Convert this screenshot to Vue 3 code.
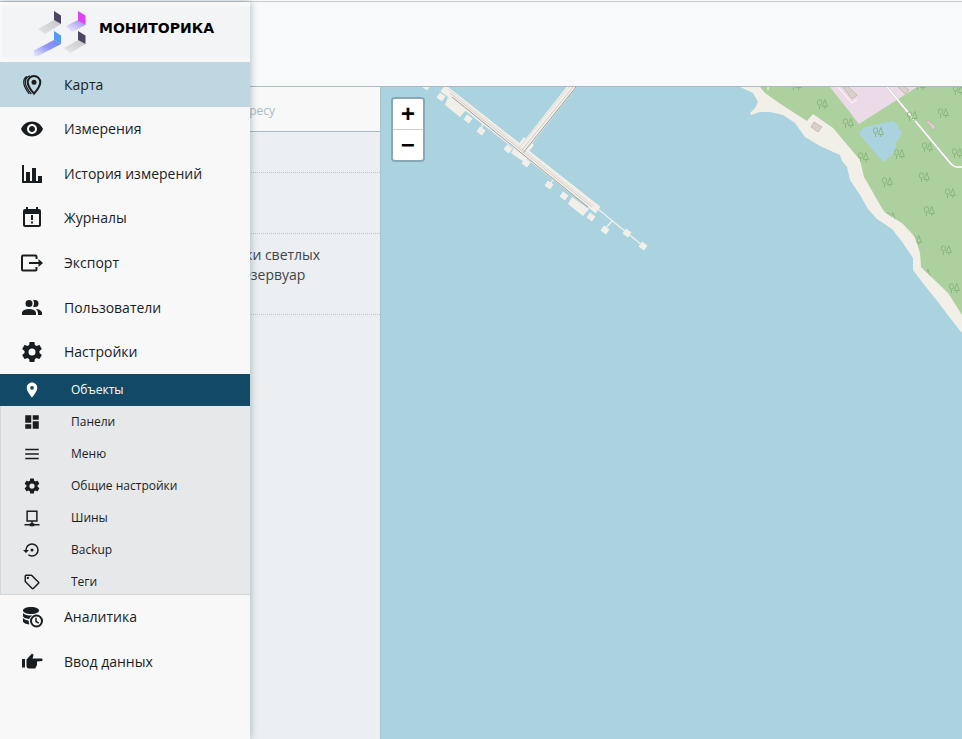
<script setup>
import { ref } from 'vue'

const icons = {
  pins: {
    stroke: [
      { d: 'M14 3a6.3 6.3 0 0 0-6.3 6.3C7.700 13.600 14 20.700 14 20.700s6.300-7.100 6.300-11.400A6.300 6.300 0 0 0 14 3z', w: 2 },
      { d: 'M10 2.800C6.800 3.600 5.300 6 5.300 9c0 4 3 8.500 6 12M6.800 3.500C4.500 4.800 3.700 6.500 3.700 9c0 4 2.500 8 5.500 12', w: 1.200 }
    ],
    fill: ['M14 6.800a2.500 2.500 0 1 0 0 5a2.500 2.500 0 1 0 0-5z']
  },
  eye: { fill: ['M12 4.500C7 4.500 2.730 7.610 1 12c1.730 4.390 6 7.500 11 7.500s9.270-3.110 11-7.500c-1.730-4.390-6-7.500-11-7.500zM12 17c-2.760 0-5-2.240-5-5s2.240-5 5-5 5 2.240 5 5-2.240 5-5 5zm0-8c-1.660 0-3 1.340-3 3s1.340 3 3 3 3-1.340 3-3-1.340-3-3-3z'] },
  chart: { fill: ['M2 3h2v16h2v-9h4v9h2V6h4v13h2v-5h4v7H2z'] },
  calendar: { fill: ['M19 3h-1V1h-2v2H8V1H6v2H5a2 2 0 0 0-2 2v14a2 2 0 0 0 2 2h14a2 2 0 0 0 2-2V5a2 2 0 0 0-2-2zm0 16H5V8h14zM11 9h2v5h-2zM11 15.500h2v2h-2z'] },
  export: { stroke: [{ d: 'M16.500 8V5.500a1 1 0 0 0-1-1H3a1 1 0 0 0-1 1v13a1 1 0 0 0 1 1h12.500a1 1 0 0 0 1-1V16M9 12h11', w: 2 }], fill: ['M18.500 8l4.500 4-4.500 4z'] },
  users: { fill: ['M16 17V19H2V17S2 13 9 13 16 17 16 17M12.500 7.500A3.500 3.500 0 1 0 9 11A3.500 3.500 0 0 0 12.500 7.500', 'M15.940 13A5.320 5.320 0 0 1 18 17V19H22V17S22 13.370 15.940 13M15 4A3.390 3.390 0 0 0 13.070 4.590A5 5 0 0 1 13.070 10.410A3.390 3.390 0 0 0 15 11A3.500 3.500 0 0 0 15 4Z'] },
  cog: { fill: ['M12,15.5A3.5,3.5 0 0,1 8.5,12A3.5,3.5 0 0,1 12,8.5A3.5,3.5 0 0,1 15.5,12A3.5,3.5 0 0,1 12,15.5M19.43,12.97C19.47,12.65 19.5,12.33 19.5,12C19.5,11.67 19.47,11.34 19.43,11L21.54,9.37C21.73,9.22 21.78,8.95 21.66,8.73L19.66,5.27C19.54,5.05 19.27,4.96 19.05,5.05L16.56,6.05C16.04,5.66 15.5,5.32 14.87,5.07L14.5,2.42C14.46,2.18 14.25,2 14,2H10C9.75,2 9.54,2.18 9.5,2.42L9.13,5.07C8.5,5.32 7.96,5.66 7.44,6.05L4.95,5.05C4.73,4.96 4.46,5.05 4.34,5.27L2.34,8.73C2.21,8.95 2.27,9.22 2.46,9.37L4.57,11C4.53,11.34 4.5,11.67 4.5,12C4.5,12.33 4.53,12.65 4.57,12.97L2.46,14.63C2.27,14.78 2.21,15.05 2.34,15.27L4.34,18.73C4.46,18.95 4.73,19.03 4.95,18.95L7.44,17.94C7.96,18.34 8.5,18.68 9.13,18.93L9.5,21.58C9.54,21.82 9.75,22 10,22H14C14.25,22 14.46,21.82 14.5,21.58L14.87,18.93C15.5,18.67 16.04,18.34 16.56,17.94L19.05,18.95C19.27,19.03 19.54,18.95 19.66,18.73L21.66,15.27C21.78,15.05 21.73,14.78 21.54,14.63L19.43,12.97Z'] },
  place: { fill: ['M12 2C8.130 2 5 5.130 5 9c0 5.250 7 13 7 13s7-7.750 7-13c0-3.870-3.130-7-7-7zm0 9.500a2.500 2.500 0 0 1 0-5 2.500 2.500 0 0 1 0 5z'] },
  panels: { fill: ['M3 13h8V3H3v10zm0 8h8v-6H3v6zm10 0h8V11h-8v10zm0-18v6h8V3h-8z'] },
  menu: { fill: ['M3 5h18v2H3zM3 11h18v2H3zM3 17h18v2H3z'] },
  bus: { stroke: [{ d: 'M5.500 3h13v13h-13zM12 16v5M2 21h20', w: 2 }], fill: ['M9 19h6v4H9z'] },
  backup: { fill: ['M12,3A9,9 0 0,0 3,12H0L4,16L8,12H5A7,7 0 0,1 12,5A7,7 0 0,1 19,12A7,7 0 0,1 12,19C10.5,19 9.09,18.5 7.94,17.7L6.5,19.14C8.04,20.3 9.94,21 12,21A9,9 0 0,0 21,12A9,9 0 0,0 12,3M14,12A2,2 0 0,0 12,10A2,2 0 0,0 10,12A2,2 0 0,0 12,14A2,2 0 0,0 14,12Z'] },
  tag: { fill: ['M21.41 11.58L12.41 2.58A2 2 0 0 0 11 2H4A2 2 0 0 0 2 4V11A2 2 0 0 0 2.590 12.420L11.590 21.420A2 2 0 0 0 13 22A2 2 0 0 0 14.410 21.410L21.410 14.410A2 2 0 0 0 22 13A2 2 0 0 0 21.410 11.580M13 20L4 11V4H11L20 13M6.500 5A1.500 1.500 0 1 1 5 6.500A1.500 1.500 0 0 1 6.500 5Z'] },
  database: {
    fill: [
      'M11 2C6.500 2 3 3.500 3 5.500S6.500 9 11 9s8-1.500 8-3.500S15.500 2 11 2z',
      'M3 8c1.500 1.800 4.500 2.600 8 2.600h1.500c-1.700 1-2.800 2-3.300 3.400C5.500 13.700 3 12.500 3 11z',
      'M3 13c1.300 1.400 3.300 2.200 5.700 2.500-.1 1.300.1 2.600.7 3.900C5.700 19 3 17.700 3 16.200z',
      'M16.500 9.500a6.500 6.500 0 1 0 0 13a6.500 6.500 0 1 0 0-13zm0 2a4.500 4.500 0 1 1 0 9a4.500 4.500 0 1 1 0-9z'
    ],
    stroke: [{ d: 'M16 12.800v3.700l2.800 1.700', w: 1.500 }]
  },
  hand: { fill: ['M2 9h3v8.500H2z', 'M6.500 9.500L12 3.500l1.200 1c.3.400.3.800.2 1.200L12.500 8.500H21.500a1.300 1.300 0 0 1 .5 2.400L17 11.500v3.500l-1.800 3.500H9a2.500 2.500 0 0 1-2.500-2z'] }
}

const mainItems = [
  { label: 'Карта', icon: 'pins' },
  { label: 'Измерения', icon: 'eye' },
  { label: 'История измерений', icon: 'chart' },
  { label: 'Журналы', icon: 'calendar' },
  { label: 'Экспорт', icon: 'export' },
  { label: 'Пользователи', icon: 'users' },
  { label: 'Настройки', icon: 'cog' }
]
const settings = [
  { label: 'Объекты', icon: 'place' },
  { label: 'Панели', icon: 'panels' },
  { label: 'Меню', icon: 'menu' },
  { label: 'Общие настройки', icon: 'cog' },
  { label: 'Шины', icon: 'bus' },
  { label: 'Backup', icon: 'backup' },
  { label: 'Теги', icon: 'tag' }
]
const extraItems = [
  { label: 'Аналитика', icon: 'database' },
  { label: 'Ввод данных', icon: 'hand' }
]
const groups = [
  { name: 'main', items: mainItems },
  { name: 'settings', items: settings },
  { name: 'extra', items: extraItems }
]
const active = ref(['Карта', 'Объекты'])
const query = ref('')

const blank = '\u00a0'
const places = [
  [blank],
  [blank, blank],
  ['Площадка перекачки светлых', 'нефтепродуктов. Резервуар', blank]
]

const trees = [
  [796, 85], [822, 104], [848, 123], [878, 132], [863, 157], [899, 154], [912, 116], [943, 113],
  [927, 147], [957, 153], [924, 177], [887, 182], [950, 193], [958, 90], [920, 85], [929, 211],
  [890, 217], [916, 240], [946, 250], [954, 288], [925, 274]
]
const dolphins = [
  [426, 86], [441, 97], [468, 119], [481, 131], [508, 149], [526, 163], [549, 185],
  [564, 196], [591, 217], [605, 230], [627, 233], [643, 246]
]
</script>

<template>
  <div class="app">
    <header class="topbar"></header>

    <div class="content">
      <section class="places">
        <div class="search">
          <input v-model="query" type="search" aria-label="Поиск" placeholder="Поиск по названию или адресу" />
        </div>
        <ul class="place-list">
          <li v-for="(lines, i) in places" :key="i">
            <span v-for="(line, n) in lines" :key="n">{{ line }}</span>
          </li>
        </ul>
      </section>

      <main class="map">
        <svg class="tiles" viewBox="381 87 581 652" preserveAspectRatio="xMinYMin slice" aria-hidden="true">
          <defs>
            <clipPath id="forest-clip">
              <path d="M760 87L765 93 782 105 807 121 813 114 833 128 860 160 864 177 883 210 886 213 903 224 915 237 920 253 921 267 948 293 962 315V87z" />
            </clipPath>
            <g id="trees" fill="none" stroke="#8ab67e" stroke-width="1">
              <ellipse cx="-2.500" cy="-1.500" rx="2.200" ry="2.700" />
              <path d="M-2.500 1.200V5M2.800-4.500L.3 2.500H5.300zM2.800 2.500V5" />
            </g>
          </defs>
          <path fill="#f2efe9" d="M740 87L753 93 758 102 755 108 750 113 751 115 760 112 770 112 783 115 795 123 805 137 820 146 840 155 842 161 847 167 850 180 860 195 868 209 877 219 892 229 903 243 913 258 913 270 922 282 938 302 950 318 962 333V87z" />
          <g clip-path="url(#forest-clip)">
            <path fill="#add19e" d="M740 87H962V339H740z" />
            <path fill="#ebdbe8" d="M830 87L859 124 917 87z" />
            <path fill="#aad3df" d="M859 134L863 128 892 121 896 123 902 133 896 143 895 152 883 162z" />
            <path d="M838 87L852 103 857 99M768 84V90" fill="none" stroke="#fff" />
            <g fill="#d9d0c9" stroke="#bcaea3" stroke-width=".7">
              <path d="M842 86L847 86 857 95 852 99zM897 86L904 86 909 90 905 94zM926 121L928 120 936 127 933 130z" />
            </g>
            <path d="M887 87L951 164Q954 167 957 167H962" fill="none" stroke="#c4c8c0" stroke-width="2.200" />
            <path d="M887 87L951 164Q954 167 957 167H962" fill="none" stroke="#fff" stroke-width="1.500" />
            <use v-for="([x, y], i) in trees" :key="i" href="#trees" :x="x" :y="y" />
          </g>
          <path fill="#d9d0c9" stroke="#bcaea3" stroke-width=".7" d="M811 127L814 122 822 127 818 132z" />

          <g fill="#f2efe9">
            <path d="M448 97L466 110 460 117 445 105zM515 146L529 157 524 162 511 153zM572 197L589 209 583 216 568 204zM524 137L534 145 527 154 517 146z" />
            <path v-for="([x, y], i) in dolphins" :key="i" d="M-1-4.500L4.500-.5 1 4.500-4.500.5z" :transform="`translate(${x} ${y})`" />
          </g>
          <g fill="none" stroke="#f2efe9">
            <path stroke-width="8" d="M443 88L598 210M574 84L521 151" />
            <path stroke-width="1.300" d="M598 209L643 246M612 221L605 229M550 184L553 180M481 130L483 123" />
          </g>
          <g fill="none" stroke="#b9b5b1" stroke-width="1">
            <path d="M448 89L595 207M569 87L519 148" stroke="#dedad6" />
            <path d="M452 97L588 207M576 87L523 153" stroke="#a09c9a" />
            <path d="M450 93L592 207M573 87L522 150" stroke="#cfcbc7" />
          </g>
        </svg>
        <div class="zoom">
          <button type="button" aria-label="Приблизить">+</button>
          <button type="button" aria-label="Отдалить">−</button>
        </div>
      </main>
    </div>

    <aside class="drawer">
      <a class="brand" href="#">
        <svg class="mark" width="54" height="48" viewBox="33 10 54 48" aria-hidden="true">
          <defs>
            <linearGradient id="fade-dark" x1="1" y1="0" x2="0" y2="1">
              <stop offset="0" stop-color="#b4b2ba" /><stop offset=".9" stop-color="#f3f4f6" />
            </linearGradient>
            <linearGradient id="fade-violet" x1="1" y1="0" x2="0" y2="1">
              <stop offset="0" stop-color="#968cff" /><stop offset="1" stop-color="#f3f4f6" />
            </linearGradient>
            <linearGradient id="fade-blue" x1="1" y1="0" x2="0" y2="1">
              <stop offset="0" stop-color="#6a84f5" /><stop offset=".5" stop-color="#9698f8" /><stop offset="1" stop-color="#eeeafa" />
            </linearGradient>
          </defs>
          <path fill="url(#fade-dark)" d="M54 20L38 29 45 34 61 24zM78 40L64 48 70 53 85.500 44z" />
          <path fill="url(#fade-violet)" d="M78 20L66 26 72 32 85.500 25z" />
          <path fill="url(#fade-blue)" d="M54 40L34 50.500V56H38L61 44z" />
          <path fill="#4d4562" d="M54 11L61 15.500V24L54 20zM78 31L85.500 35.500V44L78 40z" />
          <path fill="#dc44ee" d="M78 11L85.500 15.500V25L78 20.500z" />
          <path fill="#5599f7" d="M54 31L61 35.500V44L54 40z" />
        </svg>
        <span class="brand-name">МОНИТОРИКА</span>
      </a>
      <nav>
        <ul v-for="group in groups" :key="group.name" :class="['menu', group.name]">
          <li v-for="item in group.items" :key="item.label">
            <a href="#" :class="{ active: active.includes(item.label) }">
              <svg class="icon" viewBox="0 0 24 24" aria-hidden="true">
                <path v-for="d in icons[item.icon].fill" :key="d" :d="d" fill="currentColor" fill-rule="evenodd" />
                <path v-for="s in icons[item.icon].stroke" :key="s.d" :d="s.d" fill="none" stroke="currentColor" :stroke-width="s.w" />
              </svg>
              <span>{{ item.label }}</span>
            </a>
          </li>
        </ul>
      </nav>
    </aside>
  </div>
</template>

<style>
body {
  margin: 0;
}
</style>

<style scoped>
.app {
  position: relative;
  display: flex;
  flex-direction: column;
  box-sizing: border-box;
  min-height: 100vh;
  padding-top: 1px;
  overflow: hidden;
  background: #f9f9fb;
  color: #1a1d1f;
  font-family: "Open Sans", "Noto Sans", sans-serif;
  font-size: 14px;
  line-height: 20px;
}
ul {
  margin: 0;
  padding: 0;
  list-style: none;
}
a {
  color: inherit;
  text-decoration: none;
}
.topbar {
  height: 84px;
  border-top: 1px solid #c8cdd0;
  border-bottom: 1px solid #a9bac1;
  background: #f8f9fb;
}
.content {
  display: grid;
  grid-template-columns: 381px 1fr;
  flex: 1;
}
.places {
  border-right: 1px solid #a9c3cc;
  background: #ebeff2;
}
.search {
  display: flex;
  height: 44px;
  border-bottom: 1px solid #a9b9bf;
  background: #f8f8f8;
}
.search input {
  flex: 1;
  min-width: 0;
  padding: 2px 16px 0 92px;
  border: 0;
  outline: 0;
  background: transparent;
  font: 12px "Open Sans", "Noto Sans", sans-serif;
}
.search input::placeholder {
  color: #a9bcc5;
  opacity: 1;
}
.place-list li {
  display: flex;
  flex-direction: column;
  padding: 11px 16px 9px 115px;
  border-bottom: 1px dotted #bcc6cb;
  color: #3f4548;
}
.map {
  position: relative;
  background: #aad3df;
  overflow: hidden;
}
.tiles {
  position: absolute;
  inset: 0;
  width: 100%;
  height: 100%;
}
.zoom {
  position: absolute;
  top: 10px;
  left: 10px;
  display: flex;
  flex-direction: column;
  border: 2px solid rgba(0, 0, 0, 0.2);
  border-radius: 4px;
  background-clip: padding-box;
}
.zoom button {
  box-sizing: content-box;
  width: 30px;
  height: 26px;
  padding: 4px 0 0;
  border: 0;
  border-radius: 0 0 2px 2px;
  background: #fff;
  color: #000;
  font: bold 24px/26px "Liberation Mono", monospace;
}
.zoom button:first-child {
  border-bottom: 1px solid #ccc;
  border-radius: 2px 2px 0 0;
}
.drawer {
  position: absolute;
  top: 2px;
  bottom: 0;
  left: 0;
  width: 250px;
  background: #f8f8f8;
  box-shadow: 0 0 8px rgba(40, 80, 95, 0.4);
}
.brand {
  display: flex;
  gap: 12px;
  height: 52px;
  margin: 4px 0 4px 2px;
  padding-left: 31px;
  background: #f3f4f6;
}
.mark {
  margin-top: 4px;
}
.brand-name {
  margin-top: 12px;
  color: #000;
  font: bold 14px/20px "DejaVu Sans", sans-serif;
}
.menu {
  display: grid;
  grid-auto-rows: 1fr;
}
.menu a {
  display: flex;
  align-items: center;
  gap: 20px;
  box-sizing: border-box;
  height: 100%;
  padding-left: 20px;
}
.icon {
  flex: none;
  width: 24px;
  height: 24px;
}
.main {
  height: 312px;
}
.main a {
  padding-top: 1px;
}
.extra {
  height: 89px;
}
.main .active {
  background: #bed7e0;
}
.settings {
  grid-auto-rows: 32px;
  box-sizing: border-box;
  height: 221px;
  overflow: hidden;
  border-bottom: 1px solid #cfd3d5;
  background: #e6e8ea;
  font-size: 12px;
}
.settings a {
  gap: 30px;
  padding-left: 22px;
  border-left: 1px solid #d3d7d9;
}
.settings .icon {
  width: 18px;
  height: 18px;
}
.settings .active {
  border-color: #124966;
  background: #124966;
  color: #fff;
}
</style>
